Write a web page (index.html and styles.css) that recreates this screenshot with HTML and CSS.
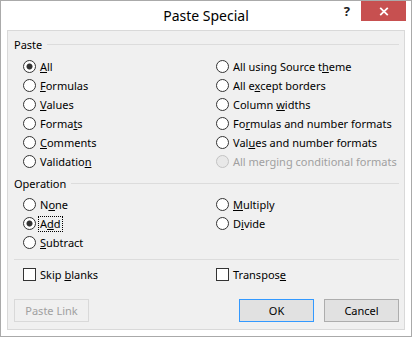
FILE: index.html
```html
<!DOCTYPE html>
<html>
<head>
<meta charset="utf-8">
<title>Paste Special</title>
<link rel="stylesheet" href="styles.css">
</head>
<body>
<div class="window">
  <div class="titlebar">
    <div class="tb-side"></div>
    <div class="title">Paste Special</div>
    <div class="tb-side tb-right">
      <span class="help">?</span>
      <span class="close"><svg width="10" height="9" viewBox="0 0 10 9"><path d="M1.2 0.8L8.8 8.2M8.8 0.8L1.2 8.2" stroke="#fff" stroke-width="1.8" fill="none"/></svg></span>
    </div>
  </div>
  <div class="panel">
    <div class="group-head"><span>Paste</span><i></i></div>
    <div class="opts paste-opts">
      <div class="col">
        <div class="radio checked"><span class="dot"></span><span class="lbl"><u>A</u>ll</span></div>
        <div class="radio"><span class="dot"></span><span class="lbl"><u>F</u>ormulas</span></div>
        <div class="radio"><span class="dot"></span><span class="lbl"><u>V</u>alues</span></div>
        <div class="radio"><span class="dot"></span><span class="lbl">Forma<u>t</u>s</span></div>
        <div class="radio"><span class="dot"></span><span class="lbl"><u>C</u>omments</span></div>
        <div class="radio"><span class="dot"></span><span class="lbl">Validatio<u>n</u></span></div>
      </div>
      <div class="col">
        <div class="radio"><span class="dot"></span><span class="lbl">All using Source t<u>h</u>eme</span></div>
        <div class="radio"><span class="dot"></span><span class="lbl">All e<u>x</u>cept borders</span></div>
        <div class="radio"><span class="dot"></span><span class="lbl">Column <u>w</u>idths</span></div>
        <div class="radio"><span class="dot"></span><span class="lbl">Fo<u>r</u>mulas and number formats</span></div>
        <div class="radio"><span class="dot"></span><span class="lbl">Val<u>u</u>es and number formats</span></div>
        <div class="radio disabled"><span class="dot"></span><span class="lbl">All merging conditional formats</span></div>
      </div>
    </div>
    <div class="group-head op-head"><span>Operation</span><i></i></div>
    <div class="opts op-opts">
      <div class="col">
        <div class="radio"><span class="dot"></span><span class="lbl">N<u>o</u>ne</span></div>
        <div class="radio checked"><span class="dot"></span><span class="lbl focus">A<u>d</u>d</span></div>
        <div class="radio"><span class="dot"></span><span class="lbl"><u>S</u>ubtract</span></div>
      </div>
      <div class="col">
        <div class="radio"><span class="dot"></span><span class="lbl"><u>M</u>ultiply</span></div>
        <div class="radio"><span class="dot"></span><span class="lbl">D<u>i</u>vide</span></div>
      </div>
    </div>
    <div class="sep"></div>
    <div class="opts checks">
      <div class="col">
        <div class="check"><span class="box"></span><span class="lbl">Skip <u>b</u>lanks</span></div>
      </div>
      <div class="col">
        <div class="check"><span class="box"></span><span class="lbl">Transpos<u>e</u></span></div>
      </div>
    </div>
    <div class="buttons">
      <button class="btn disabled">Paste Link</button>
      <span class="spacer"></span>
      <button class="btn default">OK</button>
      <button class="btn">Cancel</button>
    </div>
  </div>
</div>
</body>
</html>
```
FILE: styles.css
```css
html, body {
  margin: 0;
  padding: 0;
  background: #ffffff;
}
body {
  font-family: "Noto Sans", "Open Sans", sans-serif;
  font-size: 11px;
  color: #000;
}
.window {
  width: 412px;
  height: 337px;
  box-sizing: border-box;
  border: 1px solid #aaaaaa;
  background: #ffffff;
  display: flex;
  flex-direction: column;
}
.titlebar {
  height: 29px;
  flex: none;
  display: grid;
  grid-template-columns: 1fr auto 1fr;
}
.title {
  font-size: 14px;
  line-height: 29px;
  color: #000;
}
.tb-right {
  display: flex;
  justify-content: flex-end;
  align-items: flex-start;
  padding-right: 5px;
}
.help {
  font-weight: bold;
  font-size: 13px;
  line-height: 20px;
  color: #222;
  margin-right: 11px;
}
.close {
  width: 45px;
  height: 20px;
  background: #c75050;
  display: flex;
  align-items: center;
  justify-content: center;
}
.panel {
  flex: 1;
  margin: 0 6px 6px;
  border: 1px solid #d9d9d9;
  background: #f0f0f0;
  padding: 7px 5px 0 6px;
  display: flex;
  flex-direction: column;
}
.group-head {
  display: flex;
  align-items: center;
  height: 13px;
  line-height: 13px;
  gap: 5px;
}
.group-head i {
  flex: 1;
  height: 1px;
  background: #dcdcdc;
}
.op-head {
  margin-top: 6px;
}
.opts {
  display: flex;
  padding-left: 9px;
}
.opts .col {
  display: flex;
  flex-direction: column;
}
.opts .col:first-child {
  flex: none;
  width: 193px;
}
.paste-opts {
  margin-top: 6px;
}
.op-opts {
  margin-top: 5px;
  height: 57px;
}
.radio, .check {
  display: flex;
  align-items: center;
  height: 19px;
}
.dot {
  flex: none;
  width: 13px;
  height: 13px;
  box-sizing: border-box;
  border: 1px solid #333333;
  border-radius: 50%;
  background: #ffffff;
}
.checked .dot {
  background: radial-gradient(circle, #333333 0 2.6px, #ffffff 3.4px);
}
.disabled .dot {
  border-color: #c3c3c3;
  background: #e8e8e8;
}
.disabled .lbl {
  color: #a0a0a0;
}
.box {
  flex: none;
  width: 13px;
  height: 13px;
  box-sizing: border-box;
  border: 1px solid #333333;
  background: #ffffff;
}
.lbl {
  margin-left: 2px;
  padding: 0 1px;
  border: 1px dotted transparent;
  line-height: 14px;
  white-space: nowrap;
}
.lbl.focus {
  border-color: #000000;
}
u {
  text-underline-offset: 1px;
}
.sep {
  height: 1px;
  background: #dcdcdc;
  margin-top: 7px;
}
.checks {
  margin-top: 5px;
}
.buttons {
  display: flex;
  gap: 10px;
  margin-top: 15px;
}
.spacer {
  flex: 1;
}
.btn {
  width: 75px;
  height: 23px;
  box-sizing: border-box;
  border: 1px solid #adadad;
  background: #e1e1e1;
  font-family: "Noto Sans", "Open Sans", sans-serif;
  font-size: 11px;
  color: #000;
  padding: 0;
  margin: 0;
}
.btn.default {
  border-color: #3399ff;
}
.btn.disabled {
  border-color: #d9d9d9;
  background: #f0f0f0;
  color: #a0a0a0;
}
```
